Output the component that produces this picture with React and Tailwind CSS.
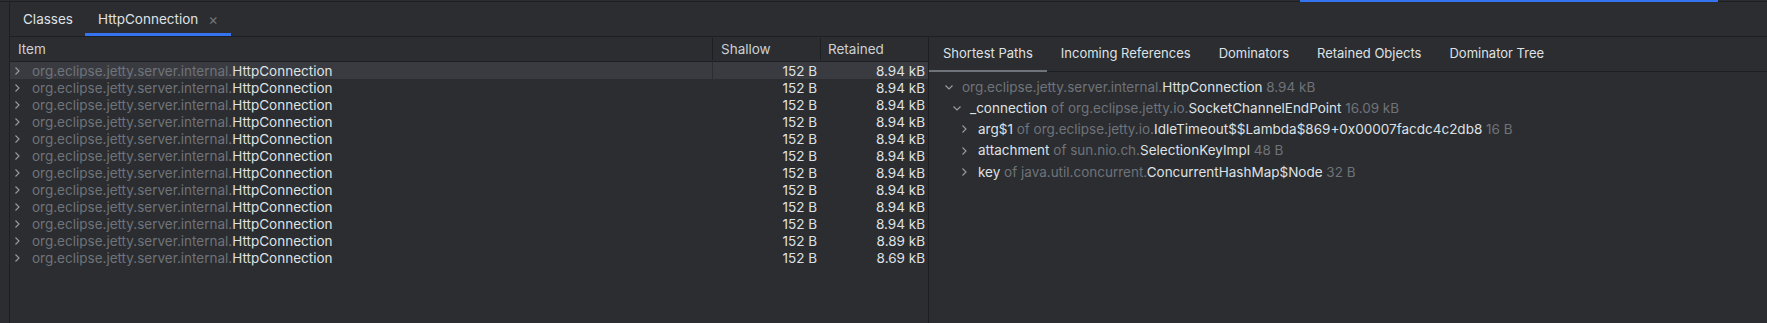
const retained = ['8.94', '8.94', '8.94', '8.94', '8.94', '8.94', '8.94', '8.94', '8.94', '8.94', '8.89', '8.69']

function ChevronRight() {
  return (
    <svg width="8" height="10" viewBox="0 0 8 10" className="shrink-0">
      <path d="M2.5 1.5 L6 5 L2.5 8.5" stroke="#9a9da3" strokeWidth="1.1" fill="none" />
    </svg>
  )
}

function ChevronDown() {
  return (
    <svg width="10" height="8" viewBox="0 0 10 8" className="shrink-0">
      <path d="M1.5 2.5 L5 6 L8.5 2.5" stroke="#9a9da3" strokeWidth="1.1" fill="none" />
    </svg>
  )
}

function TreeRow({ level, open, children }) {
  return (
    <div className="h-[21.3px] flex items-center" style={{ paddingLeft: 15 + level * 8 }}>
      <div className="w-[18px] flex items-center">{open ? <ChevronDown /> : <ChevronRight />}</div>
      <div className="whitespace-nowrap">{children}</div>
    </div>
  )
}

const Dim = ({ children }) => <span className="text-[#6f737a]">{children}</span>

export default function App() {
  return (
    <div
      className="w-[1767px] h-[323px] bg-[#2b2d30] flex flex-col overflow-hidden text-[13.5px] text-[#dfe1e5]"
      style={{ fontFamily: 'Inter, "Noto Sans", sans-serif' }}
    >
      <div className="h-[2px] flex shrink-0">
        <div className="w-[1300px] border-b border-[#1e1f22]" />
        <div className="w-[418px] bg-[#3574f0]" />
        <div className="flex-1 border-b border-[#1e1f22]" />
      </div>

      <div className="flex-1 flex min-h-0">
        <div className="w-[9px] border-r border-[#1e1f22] box-content" />

        <div className="flex-1 flex flex-col min-w-0">
          <div className="h-[35px] border-b border-[#1e1f22] flex shrink-0">
            <div className="pl-[13px] pr-[12px] pt-[1px] flex items-center">Classes</div>
            <div className="relative pl-[13px] pr-[13px] pt-[1px] flex items-center gap-[10px]">
              <span>HttpConnection</span>
              <span className="text-[#6f737a] text-[15px] leading-none">×</span>
              <div className="absolute left-0 right-0 bottom-0 h-[3px] bg-[#3574f0]" />
            </div>
          </div>

          <div className="flex-1 flex min-h-0">
            <div className="w-[918px] border-r border-[#1e1f22] box-content flex flex-col">
              <div className="h-[25px] border-b border-[#1e1f22] flex text-[#ced0d6]">
                <div className="w-[702px] pl-[8px] flex items-center">Item</div>
                <div className="w-[108px] flex items-center py-[1px]">
                  <div className="h-full border-l border-[#1e1f22] pl-[8px] flex items-center">Shallow</div>
                </div>
                <div className="w-[108px] flex items-center py-[1px]">
                  <div className="h-full border-l border-[#1e1f22] pl-[7px] flex items-center">Retained</div>
                </div>
              </div>

              {retained.map((r, i) => (
                <div key={i} className={`h-[17px] flex ${i === 0 ? 'bg-[#393b40]' : ''}`}>
                  <div className="w-[702px] pl-[3px] pt-[1px] flex items-center">
                    <div className="w-[19px] flex items-center"><ChevronRight /></div>
                    <span className="whitespace-nowrap">
                      <Dim>org.eclipse.jetty.server.internal.</Dim>HttpConnection
                    </span>
                  </div>
                  <div className={`w-[108px] pt-[1px] flex items-center justify-end pr-[3px] ${i === 0 ? 'border-l border-[#2b2d30]' : ''}`}>
                    152 B
                  </div>
                  <div className="w-[108px] pt-[1px] flex items-center justify-end pr-[3px]">{r} kB</div>
                </div>
              ))}
            </div>

            <div className="flex-1 flex flex-col min-w-0">
              <div className="h-[35px] border-b border-[#1e1f22] flex shrink-0 text-[13px]">
                {['Shortest Paths', 'Incoming References', 'Dominators', 'Retained Objects', 'Dominator Tree'].map((t, i) => (
                  <div key={t} className="relative px-[14px] flex items-center">
                    {t}
                    {i === 0 && <div className="absolute left-0 right-0 bottom-[-1px] h-[2px] bg-[#6f737a]" />}
                  </div>
                ))}
              </div>

              <div className="pt-[4px]">
                <TreeRow level={0} open>
                  <Dim>org.eclipse.jetty.server.internal.</Dim>HttpConnection <Dim>8.94 kB</Dim>
                </TreeRow>
                <TreeRow level={1} open>
                  _connection <Dim>of org.eclipse.jetty.io.</Dim>SocketChannelEndPoint <Dim>16.09 kB</Dim>
                </TreeRow>
                <TreeRow level={2}>
                  arg$1 <Dim>of org.eclipse.jetty.io.</Dim>IdleTimeout$$Lambda$869+0x00007facdc4c2db8 <Dim>16 B</Dim>
                </TreeRow>
                <TreeRow level={2}>
                  attachment <Dim>of sun.nio.ch.</Dim>SelectionKeyImpl <Dim>48 B</Dim>
                </TreeRow>
                <TreeRow level={2}>
                  key <Dim>of java.util.concurrent.</Dim>ConcurrentHashMap$Node <Dim>32 B</Dim>
                </TreeRow>
              </div>
            </div>
          </div>
        </div>
      </div>
    </div>
  )
}
